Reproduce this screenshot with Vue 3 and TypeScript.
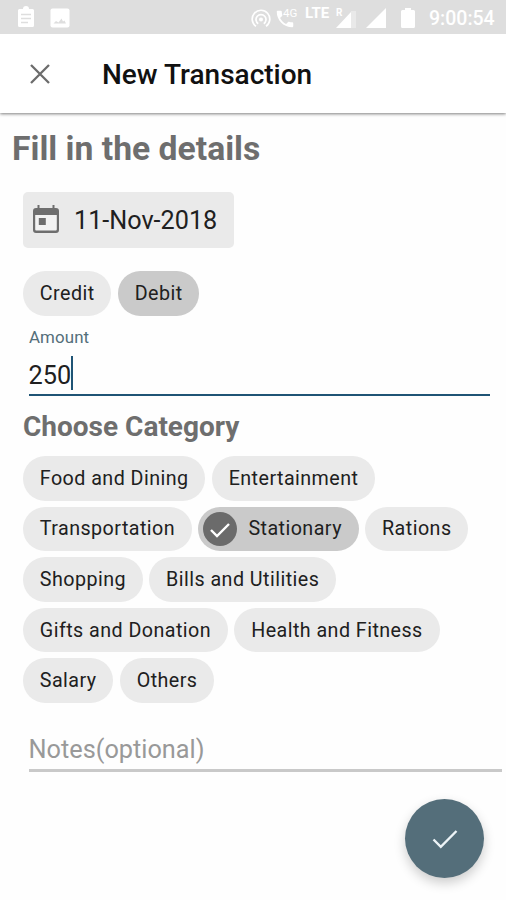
<script setup lang="ts">
import { ref } from 'vue'

type Kind = 'Credit' | 'Debit'

const kinds: Kind[] = ['Credit', 'Debit']
const kind = ref<Kind>('Debit')

const categories: string[] = [
  'Food and Dining',
  'Entertainment',
  'Transportation',
  'Stationary',
  'Rations',
  'Shopping',
  'Bills and Utilities',
  'Gifts and Donation',
  'Health and Fitness',
  'Salary',
  'Others',
]
const category = ref('Stationary')
const amount = ref('250')
</script>

<template>
  <div class="screen">
    <div class="status">
      <svg class="st-clip" viewBox="0 0 18 22">
        <path fill="#fff" d="M2.500 3H6a3 3 0 0 1 6 0h3.500A1.500 1.500 0 0 1 17 4.500v15a1.500 1.500 0 0 1-1.500 1.500h-13A1.500 1.500 0 0 1 1 19.500v-15A1.500 1.500 0 0 1 2.500 3z" />
        <path stroke="#dedede" stroke-width="1.300" d="M4 8.500h10M4 12.500h10M4 16.500h7" />
      </svg>
      <svg class="st-img" viewBox="0 0 20 20">
        <rect x="0.500" y="0.500" width="19" height="19" rx="2" fill="#fff" />
        <path fill="#dedede" d="M3.500 15.500l2.500-2.500 2.500 1.500 3-4 1.500 3 1.500-1 1.500 3z" />
      </svg>
      <span class="spacer"></span>
      <svg class="st-hot" viewBox="0 0 20 20" fill="none" stroke="#fff" stroke-width="1.700">
        <circle cx="10" cy="11.500" r="2" fill="#fff" stroke="none" />
        <path d="M7.200 15.700a5 5 0 1 1 5.600 0M5 18.300a8.800 8.800 0 1 1 10 0" />
      </svg>
      <div class="st-call">
        <svg viewBox="0 0 24 24"><path fill="#fff" d="M6.600 10.800c1.400 2.800 3.800 5.100 6.600 6.600l2.200-2.200c.3-.3.700-.4 1-.2 1.100.4 2.300.6 3.600.6.600 0 1 .4 1 1V20c0 .6-.4 1-1 1C10.600 21 3 13.400 3 4c0-.6.500-1 1-1h3.500c.6 0 1 .4 1 1 0 1.200.2 2.400.6 3.600.1.300 0 .7-.3 1z" /></svg>
        <span class="st-4g">4G</span>
      </div>
      <span class="st-lte">LTE</span>
      <div class="st-roam">
        <span class="st-r">R</span>
        <svg viewBox="0 0 20 20"><path fill="#e9e9e9" d="M15 3h5v17h-5z" /><path fill="#fff" d="M0 20L15 4v16z" /></svg>
      </div>
      <svg class="st-sig" viewBox="0 0 20 20"><path fill="#fff" d="M0 20L20 0v20z" /></svg>
      <svg class="st-bat" viewBox="0 0 14 20"><path fill="#fff" d="M1.500 2H4V0h6v2h2.500A1.500 1.500 0 0 1 14 3.500v15a1.500 1.500 0 0 1-1.500 1.500h-11A1.500 1.500 0 0 1 0 18.500v-15A1.500 1.500 0 0 1 1.500 2z" /></svg>
      <span class="clock">9:00:54</span>
    </div>

    <header class="bar">
      <svg class="close" viewBox="0 0 20 20"><path d="M1 1l18 18M19 1L1 19" stroke="#6c6c6c" stroke-width="2.300" fill="none" /></svg>
      <h1>New Transaction</h1>
    </header>

    <main>
      <h2>Fill in the details</h2>

      <div class="date">
        <svg viewBox="0 0 26 29">
          <path fill="#f3f3f3" d="M2 9h22v17H2z" />
          <path fill="#6e6e6e" fill-rule="evenodd" d="M4.500 0h2v3h13V0h2v3H23a3 3 0 0 1 3 3v19a3 3 0 0 1-3 3H3a3 3 0 0 1-3-3V6a3 3 0 0 1 3-3h1.500zM2.200 10v14.200c0 .9.500 1.400 1.300 1.400h19c.8 0 1.300-.5 1.300-1.400V10z" />
          <path fill="#6e6e6e" d="M5.800 13h7v7h-7z" />
        </svg>
        <span>11-Nov-2018</span>
      </div>

      <div class="chips kinds">
        <button v-for="k in kinds" :key="k" class="chip" :class="{ on: k === kind }" @click="kind = k">{{ k }}</button>
      </div>

      <div class="label">Amount</div>
      <div class="amount"><span>{{ amount }}</span><i class="caret"></i></div>

      <h3>Choose Category</h3>
      <div class="chips">
        <button
          v-for="c in categories"
          :key="c"
          class="chip"
          :class="{ on: c === category, checked: c === category }"
          @click="category = c"
        >
          <svg v-if="c === category" class="check" viewBox="0 0 34 34">
            <circle cx="17" cy="17" r="17" fill="#6b6b6b" />
            <path d="M8 18l6 6L26 12" fill="none" stroke="#fff" stroke-width="2.400" />
          </svg>
          <span>{{ c }}</span>
        </button>
      </div>

      <div class="notes">Notes(optional)</div>
    </main>

    <button class="fab">
      <svg viewBox="0 0 26 20"><path d="M1.500 10.500l7.300 7.300L24.500 2" fill="none" stroke="#edf4f7" stroke-width="2.400" /></svg>
    </button>
  </div>
</template>

<style>
body {
  margin: 0;
  background: #fefefe;
}
</style>

<style scoped>
.screen {
  position: relative;
  width: 506px;
  height: 900px;
  overflow: hidden;
  background: #fefefe;
  font-family: Roboto, 'Liberation Sans', sans-serif;
  color: #202020;
  display: flex;
  flex-direction: column;
}
svg {
  display: block;
  flex: none;
}
button {
  border: 0;
  margin: 0;
  font-family: inherit;
  color: inherit;
}
.status {
  height: 34px;
  flex: none;
  background: #dedede;
  color: #fff;
  display: flex;
  align-items: flex-start;
  box-sizing: border-box;
  padding: 0 11px 0 17px;
}
.st-clip { width: 18px; height: 22px; margin-top: 6px; }
.st-img { width: 20px; height: 20px; margin: 8px 0 0 15px; }
.spacer { flex: 1; }
.st-hot { width: 20px; height: 20px; margin-top: 8px; }
.st-call { display: flex; width: 27px; margin-left: 3px; }
.st-call svg { width: 22px; height: 22px; margin: 8px 0 0 0; }
.st-4g { font-size: 11.500px; line-height: 12px; margin: 7px 0 0 -13px; }
.st-lte { width: 25px; font-size: 15px; font-weight: 700; line-height: 14px; margin: 6px 0 0 4px; }
.st-roam { display: flex; width: 20px; margin-left: 6px; }
.st-r { width: 0; font-size: 10px; font-weight: 700; line-height: 10px; margin-top: 8px; }
.st-roam svg { width: 20px; height: 20px; margin-top: 8px; }
.st-sig { width: 20px; height: 20px; margin: 8px 0 0 10px; }
.st-bat { width: 14px; height: 20px; margin: 8px 0 0 15px; }
.clock { width: 66px; font-size: 19.500px; font-weight: 500; line-height: 24px; margin: 7px 0 0 14px; white-space: nowrap; }

.bar {
  height: 79px;
  flex: none;
  display: flex;
  align-items: center;
  padding-left: 30px;
  background: #fff;
  box-shadow: 0 1px 3px rgba(0, 0, 0, 0.5);
  clip-path: inset(0 0 -6px 0);
}
.close { width: 20px; height: 20px; }
h1 {
  margin: 2px 0 0 52px;
  font-size: 28px;
  line-height: 34px;
  font-weight: 500;
  color: #111;
}
main {
  display: flex;
  flex-direction: column;
  align-items: flex-start;
  padding-left: 23px;
}
h2 {
  margin: 16px 0 0 -11px;
  font-size: 33.700px;
  line-height: 40px;
  font-weight: 700;
  color: #6e6e6e;
}
.date {
  display: flex;
  align-items: center;
  box-sizing: border-box;
  width: 211px;
  height: 56px;
  margin-top: 23px;
  padding-left: 10px;
  border-radius: 5px;
  background: #eaeaea;
  font-size: 25.200px;
}
.date svg { width: 26px; height: 29px; margin: 0 15px 1px 0; }
.chips {
  display: flex;
  flex-wrap: wrap;
  gap: 6px 6.500px;
  width: 483px;
}
.kinds { margin-top: 23px; }
.chip {
  display: flex;
  align-items: center;
  height: 44.600px;
  padding: 0 16.800px;
  border-radius: 22.300px;
  background: #eaeaea;
  font-size: 19.700px;
  letter-spacing: 0.450px;
  white-space: nowrap;
}
.on { background: #cacaca; }
.checked { padding-left: 5px; }
.check { width: 34px; height: 34px; margin-right: 11px; }
.label {
  margin: 11px 0 0 6px;
  font-size: 16.900px;
  line-height: 20px;
  letter-spacing: 0.100px;
  color: #546e7a;
}
.amount {
  display: flex;
  align-items: flex-end;
  box-sizing: border-box;
  width: 461px;
  height: 49px;
  padding-bottom: 4px;
  margin-left: 5.500px;
  border-bottom: 2.500px solid #1f5475;
  font-size: 25.300px;
  line-height: 29px;
}
.caret { width: 2px; height: 34px; background: #1f5475; }
h3 {
  margin: 14px 0 12.400px;
  font-size: 28px;
  line-height: 34px;
  font-weight: 700;
  color: #6e6e6e;
}
.notes {
  box-sizing: border-box;
  width: 473px;
  height: 40px;
  margin: 28.600px 0 0 5.500px;
  border-bottom: 3px solid #c9c9c9;
  font-size: 25.300px;
  line-height: 36px;
  color: #999;
}
.fab {
  position: absolute;
  left: 405px;
  top: 799px;
  width: 79px;
  height: 79px;
  padding: 0;
  border-radius: 50%;
  background: #546e7a;
  display: flex;
  align-items: center;
  justify-content: center;
  box-shadow: 0 5px 12px rgba(0, 0, 0, 0.2);
}
.fab svg { width: 26px; height: 20px; }
</style>
